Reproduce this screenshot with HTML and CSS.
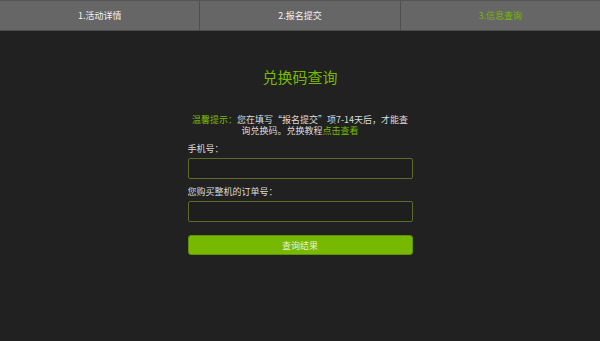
FILE: index.html
```html
<!DOCTYPE html>
<html lang="zh-CN">
<head>
    <meta charset="UTF-8">
    <meta name="viewport" content="width=device-width, initial-scale=1.0">
    <title>兑换码查询</title>
    <link rel="stylesheet" href="styles.css">
</head>
<body>
    <div class="tabs">
        <div class="tab">1.活动详情</div>
        <div class="tab">2.报名提交</div>
        <div class="tab active">3.信息查询</div>
    </div>

    <div class="main">
        <h1>兑换码查询</h1>
        <p class="tip"><span class="green">温馨提示：</span>您在填写“报名提交”项7-14天后，才能查询兑换码。兑换教程<span class="green">点击查看</span></p>

        <label for="phone">手机号：</label>
        <input type="text" id="phone" class="field">

        <label for="order" class="second">您购买整机的订单号：</label>
        <input type="text" id="order" class="field">

        <button class="query-btn">查询结果</button>
    </div>
</body>
</html>
```

FILE: styles.css
```css
body {
    margin: 0;
    padding: 0;
    background: #212121;
    font-family: "Noto Sans CJK SC", "Noto Sans", sans-serif;
    color: #dcdcdc;
}
.tabs {
    display: flex;
    height: 31px;
    background: #666;
    border-top: 1px solid #555;
    border-bottom: 1px solid #4a4a4a;
    box-sizing: border-box;
}
.tab {
    flex: 1;
    text-align: center;
    line-height: 29px;
    font-size: 9px;
    color: #f2f2f2;
    border-right: 1px solid #4f4f4f;
}
.tab:last-child {
    border-right: none;
}
.tab.active {
    color: #76b900;
}
.main {
    width: 225px;
    margin: 0 auto;
}
h1 {
    margin: 36px 0 0;
    font-size: 15px;
    line-height: 20px;
    font-weight: normal;
    text-align: center;
    color: #76b900;
}
.tip {
    margin: 27px 0 0;
    font-size: 9px;
    line-height: 11px;
    text-align: center;
}
.green {
    color: #76b900;
}
label {
    display: block;
    margin-top: 7px;
    font-size: 9px;
    line-height: 11px;
}
label.second {
    margin-top: 7px;
}
.field {
    display: block;
    width: 100%;
    height: 21px;
    margin-top: 4px;
    box-sizing: border-box;
    background: #1e1e1e;
    border: 1px solid #5a6b2c;
    border-radius: 2px;
    outline: none;
}
.query-btn {
    display: block;
    width: 100%;
    height: 20px;
    margin-top: 13px;
    background: #76b900;
    border: 1px solid #5e9200;
    border-radius: 3px;
    color: #e6f4cf;
    font-family: "Noto Sans CJK SC", sans-serif;
    font-size: 9px;
    cursor: pointer;
}
```
